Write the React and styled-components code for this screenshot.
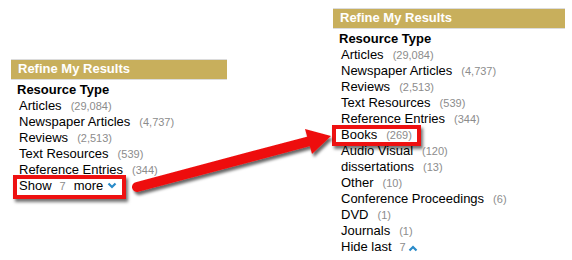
import * as React from "react";
import styled, { createGlobalStyle } from "styled-components";

const GlobalStyle = createGlobalStyle`
  html, body {
    margin: 0;
    padding: 0;
    background: #ffffff;
  }
`;

const Page = styled.div({
    position: "relative",
    display: "flex",
    alignItems: "flex-start",
    gap: "106px",
    width: "572px",
    height: "260px",
    paddingLeft: "11px",
    boxSizing: "border-box",
    overflow: "hidden",
    fontFamily: '"Liberation Sans", Arial, sans-serif',
    color: "#000",
})

const Panel = styled.div`
    width: ${(p) => p.$width}px;
    margin-top: ${(p) => p.$top}px;
    flex-shrink: 0;
`

const Header = styled.div({
    height: "19px",
    lineHeight: "17px",
    padding: "0 7px",
    background: "#c8af5c",
    borderTop: "1px solid #dcdcdc",
    borderBottom: "1px solid #dcdcdc",
    color: "#ffffff",
    fontSize: "13px",
    fontWeight: 700,
    whiteSpace: "nowrap",
})

const Facet = styled.div({
    paddingTop: "2px",
    fontSize: "13px",
    lineHeight: "16px",
})

const FacetTitle = styled.div({
    paddingLeft: "6px",
    fontWeight: 700,
})

const Row = styled.div`
    position: relative;
    padding-left: 8px;
    white-space: nowrap;

    ${(p) => p.$box && `
        &::after {
            content: "";
            position: absolute;
            left: ${p.$box.left}px;
            top: ${p.$box.top}px;
            width: ${p.$box.width}px;
            height: ${p.$box.height}px;
            border: 4px solid #ee1111;
            box-sizing: border-box;
            box-shadow: 2px 3px 3px rgba(0, 0, 0, 0.55);
        }
    `}
`

const Count = styled.span({
    marginLeft: "9px",
    color: "#8c8c8c",
    fontSize: "11px",
    lineHeight: "12px",
})

const Toggle = styled.span({
    marginLeft: "8px",
    color: "#8c8c8c",
    fontSize: "11px",
    lineHeight: "12px",
})

const More = styled.span({
    marginLeft: "8px",
})

const Chevron = styled.svg`
    display: inline-block;
    vertical-align: ${(p) => p.$up ? "-1px" : "1px"};
    margin-left: ${(p) => p.$gap}px;
`

const ArrowLayer = styled.svg({
    position: "absolute",
    left: 0,
    top: 0,
    pointerEvents: "none",
})

const Caret = ({ up, gap }) => (
    <Chevron $up={up} $gap={gap} width="10" height="7" viewBox="0 0 10 7">
        <path
            d={up ? "M1.5 5.5 L5 2 L8.5 5.5" : "M1.5 1.5 L5 5 L8.5 1.5"}
            fill="none"
            stroke="#2a8bc9"
            strokeWidth="2.2"
        />
    </Chevron>
)

const firstItems = [
    ["Articles", "29,084"],
    ["Newspaper Articles", "4,737"],
    ["Reviews", "2,513"],
    ["Text Resources", "539"],
    ["Reference Entries", "344"],
]

const moreItems = [
    ["Books", "269"],
    ["Audio Visual", "120"],
    ["dissertations", "13"],
    ["Other", "10"],
    ["Conference Proceedings", "6"],
    ["DVD", "1"],
    ["Journals", "1"],
]

const Item = ({ label, count, box }) => (
    <Row $box={box}>
        {label}<Count>({count})</Count>
    </Row>
)

const Arrow = () => (
    <ArrowLayer width="572" height="260">
        <defs>
            <filter id="shade" x="-10%" y="-30%" width="130%" height="170%">
                <feDropShadow dx="2" dy="3" stdDeviation="1.6" floodColor="#000" floodOpacity="0.6" />
            </filter>
        </defs>
        <g filter="url(#shade)" fill="#ee1111">
            <line x1="137" y1="187" x2="310" y2="141" stroke="#ee1111" strokeWidth="10" strokeLinecap="round" />
            <polygon points="305,129 331,136 312,154" />
        </g>
    </ArrowLayer>
)

export default function App() {
    return (
        <Page>
            <GlobalStyle />
            <Panel $width={216} $top={59}>
                <Header>Refine My Results</Header>
                <Facet>
                    <FacetTitle>Resource Type</FacetTitle>
                    {firstItems.map(([l, c]) => <Item key={l} label={l} count={c} />)}
                    <Row $box={{ left: 2, top: -3, width: 113, height: 24 }}>
                        Show<Toggle>7</Toggle><More>more</More><Caret gap={4} />
                    </Row>
                </Facet>
            </Panel>
            <Panel $width={232} $top={8}>
                <Header>Refine My Results</Header>
                <Facet>
                    <FacetTitle>Resource Type</FacetTitle>
                    {firstItems.map(([l, c]) => <Item key={l} label={l} count={c} />)}
                    {moreItems.map(([l, c], i) => (
                        <Item
                            key={l}
                            label={l}
                            count={c}
                            box={i === 0 ? { left: -1, top: -2, width: 89, height: 21 } : null}
                        />
                    ))}
                    <Row>
                        Hide last<Toggle>7</Toggle><Caret up gap={2} />
                    </Row>
                </Facet>
            </Panel>
            <Arrow />
        </Page>
    )
}
